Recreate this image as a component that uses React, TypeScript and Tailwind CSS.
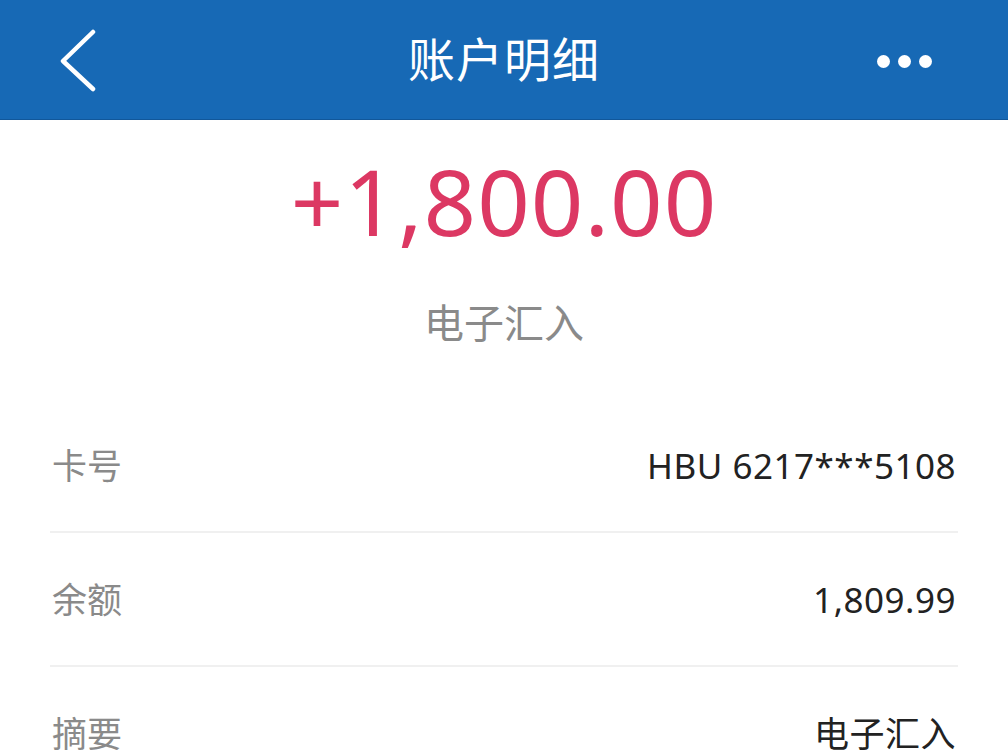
const rows = [
  { label: '卡号', value: 'HBU 6217***5108' },
  { label: '余额', value: '1,809.99' },
  { label: '摘要', value: '电子汇入' },
];

const font = { fontFamily: '"Noto Sans", "Noto Sans CJK SC", sans-serif' };

export default function App() {
  return (
    <div className="w-[1008px] h-[756px] overflow-hidden bg-white" style={font}>
      <header className="h-[120px] bg-[#1769b5] border-b border-[#11579a] flex items-center justify-between">
        <div className="w-[160px] pl-[58px] pt-[2px] flex items-center">
          <svg width="40" height="64" viewBox="0 0 40 64" fill="none">
            <path d="M35 3 L5 32 L35 60" stroke="#fff" strokeWidth="4.5" strokeLinecap="round" strokeLinejoin="round" />
          </svg>
        </div>
        <h1 className="text-white text-[47px] leading-none font-normal tracking-[1px]">账户明细</h1>
        <div className="w-[160px] pr-[76px] pt-[3px] flex items-center justify-end gap-[8px]">
          <span className="w-[13px] h-[13px] rounded-full bg-white" />
          <span className="w-[13px] h-[13px] rounded-full bg-white" />
          <span className="w-[13px] h-[13px] rounded-full bg-white" />
        </div>
      </header>

      <div className="flex flex-col items-center">
        <div className="mt-[35px] text-[92px] leading-none tracking-[1px] text-[#dc3863]">+1,800.00</div>
        <div className="mt-[56px] text-[40px] leading-none text-[#8a8a8a]">电子汇入</div>
      </div>

      <div className="mt-[56px] px-[50px]">
        {rows.map((r) => (
          <div key={r.label} className="h-[134px] flex items-center justify-between border-b-2 border-[#f0f0f0]">
            <span className="text-[35px] leading-none text-[#8a8a8a] pl-[2px]">{r.label}</span>
            <span className="text-[35px] leading-none text-[#222] tracking-[0.5px] pr-[2px]">{r.value}</span>
          </div>
        ))}
      </div>
    </div>
  );
}
